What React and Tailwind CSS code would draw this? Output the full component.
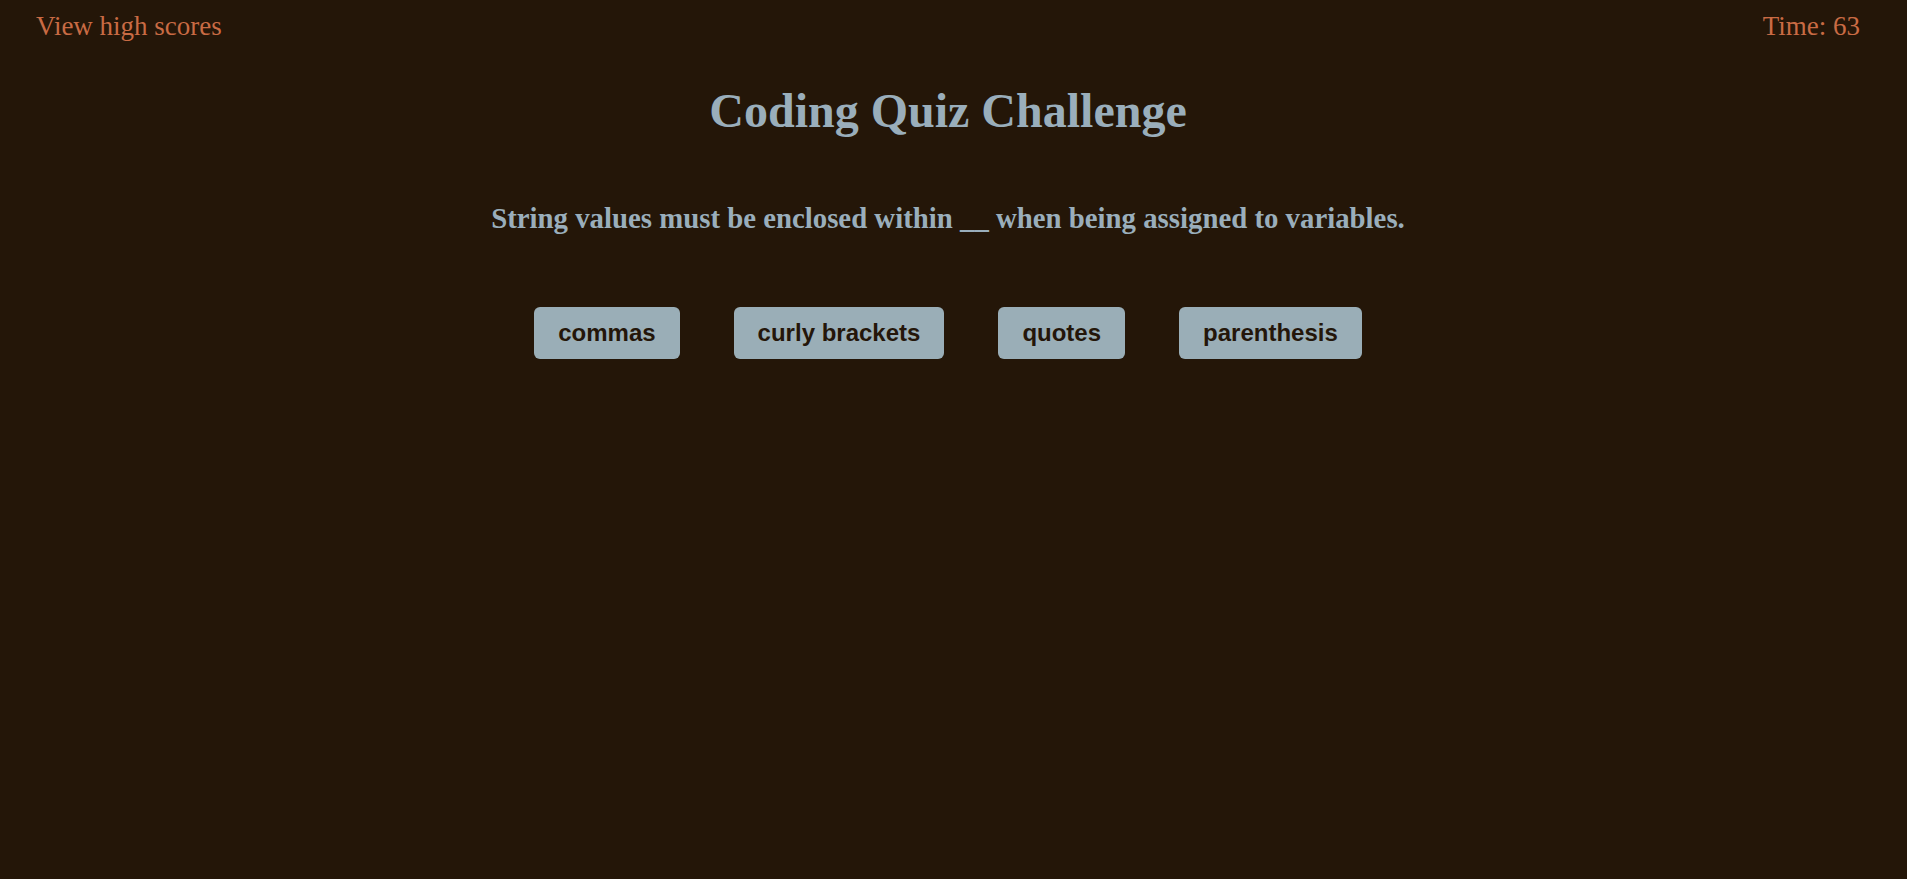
import React from 'react';

const choices = ['commas', 'curly brackets', 'quotes', 'parenthesis'];

export default function App() {
  return (
    <div className="min-h-screen bg-[#241608] pr-[11px] font-['Liberation_Serif',serif]">
      {/* header */}
      <header className="flex justify-between px-9 pt-[11px] text-[27px] leading-[31px] text-[#c96b44]">
        <a href="#">View high scores</a>
        <span>Time: 63</span>
      </header>

      <main className="flex flex-col items-center">
        <h1 className="mt-[41px] text-[48px] leading-[55px] font-bold text-[#9aaebb]">
          Coding Quiz Challenge
        </h1>

        <p className="mt-[64px] text-[28.8px] leading-[33px] font-bold text-[#9aaebb]">
          String values must be enclosed within __ when being assigned to variables.
        </p>

        <div className="mt-[72px] flex gap-[54px]">
          {choices.map((choice) => (
            <button
              key={choice}
              className="rounded-md bg-[#9aaeb7] px-6 py-3 font-['Liberation_Sans',sans-serif] text-[24px] leading-[28px] font-bold text-[#24160a]"
            >
              {choice}
            </button>
          ))}
        </div>
      </main>
    </div>
  );
}
